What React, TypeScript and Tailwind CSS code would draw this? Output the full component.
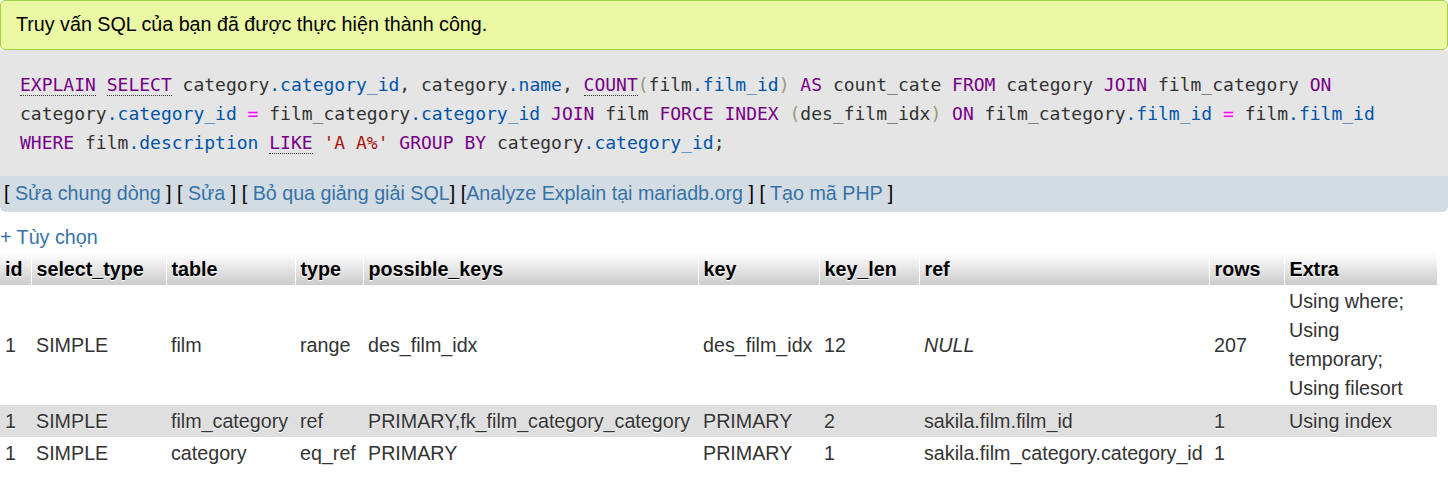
import React from 'react'

type Tok = [string, string?]

// token classes for the highlighted query
const K = 'text-[#770088]'
const V = 'text-[#0055aa]'
const O = 'text-[#ff00ff]'
const S = 'text-[#aa1111]'
const B = 'text-[#999977]'
const D = 'text-[#770088] border-b border-dotted border-[#333]'

const sqlLines: Tok[][] = [
  [
    ['EXPLAIN', D], [' '], ['SELECT', D], [' category'], ['.category_id', V], [', category'], ['.name', V], [', '],
    ['COUNT', D], ['(', B], ['film'], ['.film_id', V], [')', B], [' '], ['AS', K], [' count_cate '], ['FROM', K],
    [' category '], ['JOIN', K], [' film_category '], ['ON', K],
  ],
  [
    ['category'], ['.category_id', V], [' '], ['=', O], [' film_category'], ['.category_id', V], [' '], ['JOIN', K],
    [' film '], ['FORCE', K], [' '], ['INDEX', K], [' '], ['(', B], ['des_film_idx'], [')', B], [' '], ['ON', K],
    [' film_category'], ['.film_id', V], [' '], ['=', O], [' film'], ['.film_id', V],
  ],
  [
    ['WHERE', K], [' film'], ['.description', V], [' '], ['LIKE', D], [' '], ["'A A%'", S], [' '], ['GROUP', K], [' '],
    ['BY', K], [' category'], ['.category_id', V], [';'],
  ],
]

const columns = [
  { name: 'id', w: 'w-[31px]' },
  { name: 'select_type', w: 'w-[135px]' },
  { name: 'table', w: 'w-[129px]' },
  { name: 'type', w: 'w-[68px]' },
  { name: 'possible_keys', w: 'w-[335px]' },
  { name: 'key', w: 'w-[121px]' },
  { name: 'key_len', w: 'w-[100px]' },
  { name: 'ref', w: 'w-[290px]' },
  { name: 'rows', w: 'w-[75px]' },
  { name: 'Extra', w: 'w-[153px]' },
]

const rows: { cells: (string | string[])[]; bg: string; h: string }[] = [
  {
    cells: ['1', 'SIMPLE', 'film', 'range', 'des_film_idx', 'des_film_idx', '12', 'NULL', '207',
      ['Using where;', 'Using', 'temporary;', 'Using filesort']],
    bg: 'bg-white',
    h: 'h-[120px]',
  },
  {
    cells: ['1', 'SIMPLE', 'film_category', 'ref', 'PRIMARY,fk_film_category_category', 'PRIMARY', '2',
      'sakila.film.film_id', '1', 'Using index'],
    bg: 'bg-[#dfdfdf]',
    h: 'h-[32px]',
  },
  {
    cells: ['1', 'SIMPLE', 'category', 'eq_ref', 'PRIMARY', 'PRIMARY', '1', 'sakila.film_category.category_id', '1', ''],
    bg: 'bg-white',
    h: 'h-[33px]',
  },
]

const links = [
  ' Sửa chung dòng ',
  ' Sửa ',
  ' Bỏ qua giảng giải SQL',
  'Analyze Explain tại mariadb.org ',
  ' Tạo mã PHP ',
]

export default function App() {
  return (
    <div className="min-h-screen bg-white font-['Liberation_Sans',Arial,sans-serif] text-[19.7px] text-[#333]">
      <div className="h-[50px] flex items-center pl-[15px] bg-[#ebf8a4] border border-[#a2d246] rounded-[5px] text-black">
        Truy vấn SQL của bạn đã được thực hiện thành công.
      </div>

      <div className="bg-[#e5e5e5] pt-[20px] pb-[19px] pl-[20px] font-['DejaVu_Sans_Mono',monospace] text-[18px] leading-[29px] text-[#333]">
        {sqlLines.map((line, i) => (
          <div key={i} className="whitespace-pre">
            {line.map(([t, c], j) => (
              <span key={j} className={c}>{t}</span>
            ))}
          </div>
        ))}
      </div>

      <div className="h-[36px] flex items-center pl-[4px] bg-[#d3dce3] rounded-b-[6px] text-black whitespace-pre">
        {links.map((l, i) => (
          <span key={i}>
            {i > 0 && ' '}[<a className="text-[#3672a8]">{l}</a>]
          </span>
        ))}
      </div>

      <div className="mt-[12px] h-[26px] leading-[26px] text-[#3672a8]">+ Tùy chọn</div>

      <table className="mt-[3px] table-fixed border-collapse w-[1437px] [text-shadow:0_1px_0_#fff]">
        <thead>
          <tr className="h-[32px] bg-gradient-to-b from-white to-[#cccccc]">
            {columns.map((c) => (
              <th
                key={c.name}
                className={`${c.w} px-[5px] text-left font-bold text-black border-r border-white leading-[29px]`}
              >
                {c.name}
              </th>
            ))}
          </tr>
        </thead>
        <tbody>
          {rows.map((r, i) => (
            <tr key={i} className={`${r.bg} ${r.h}`}>
              {r.cells.map((cell, j) => (
                <td
                  key={j}
                  className={`px-[5px] py-0 leading-[29px] whitespace-nowrap align-middle ${
                    cell === 'NULL' ? 'italic' : ''
                  }`}
                >
                  {Array.isArray(cell) ? cell.map((l) => <div key={l}>{l}</div>) : cell}
                </td>
              ))}
            </tr>
          ))}
        </tbody>
      </table>
    </div>
  )
}
